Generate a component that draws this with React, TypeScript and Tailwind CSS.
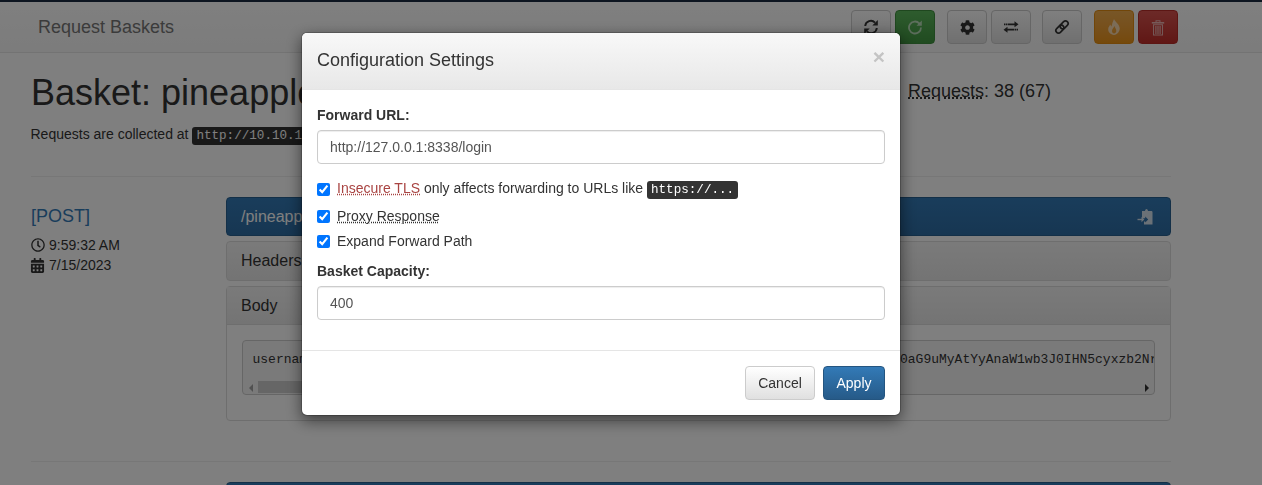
import React from "react";
import { FaCog, FaRegClock, FaCalendarAlt } from "react-icons/fa";

const btnBase = "w-10 h-[34px] flex items-center justify-center rounded border text-sm shrink-0";
const btnDefault = btnBase + " border-[#ccc] bg-gradient-to-b from-white to-[#e0e0e0] text-[#333]";

function SyncIcon() {
  return (
    <svg width="16" height="16" viewBox="0 0 16 16" fill="currentColor">
      <path d="M2.200 7A5.700 5.700 0 0 1 12 3.600" fill="none" stroke="currentColor" strokeWidth="1.900" />
      <path d="M14.800 1v5.500H9.300z" />
      <path d="M13.800 9A5.700 5.700 0 0 1 4 12.400" fill="none" stroke="currentColor" strokeWidth="1.900" />
      <path d="M1.200 15V9.500H6.700z" />
    </svg>
  );
}
function RedoIcon() {
  return (
    <svg width="16" height="16" viewBox="0 0 16 16" fill="currentColor">
      <path d="M12.300 4.300A6 6 0 1 0 14 8.500" fill="none" stroke="currentColor" strokeWidth="1.800" />
      <path d="M14.800 1.500v5.300H9.500z" />
    </svg>
  );
}
function ExchangeIcon() {
  return (
    <svg width="16" height="16" viewBox="0 0 16 16" fill="currentColor">
      <path d="M4.500 4.500h7V2.300L15.500 5.300l-4 3V6.200h-7z" />
      <path d="M1 4.500h1.500v1.700H1zM3 4.500h1v1.700H3z" />
      <path d="M11.500 9.800h-7V7.700L.5 10.700l4 3v-2.200h7z" />
      <path d="M15 9.800h-1.500v1.700H15zM13 9.800h-1v1.700h1z" />
    </svg>
  );
}
function LinkIcon() {
  return (
    <svg width="16" height="16" viewBox="0 0 16 16" fill="none" stroke="currentColor" strokeWidth="1.700">
      <g transform="rotate(-45 8 8)">
        <rect x="0.500" y="5.400" width="9" height="5.200" rx="2.600" />
        <rect x="6.500" y="5.400" width="9" height="5.200" rx="2.600" />
      </g>
    </svg>
  );
}
function FireIcon() {
  return (
    <svg width="16" height="16" viewBox="0 0 16 16" fill="currentColor" fillRule="evenodd">
      <path d="M8 0c1 3 5 4.500 5.700 9 .3 3.500-2.500 6.500-5.700 7-3.500-.3-6-3-5.800-6 .1-2 1.500-3.500 2.300-4.500.1 1 .5 1.500 1 2C6 5 6.800 2.500 8 0zM8.500 7c-.3 1.500-2.500 2.500-2.500 5 0 1.500 1 2.500 2 2.500s2.300-1 2.300-2.500c0-2-1.300-3-1.800-5z" />
    </svg>
  );
}
function TrashIcon() {
  return (
    <svg width="16" height="17" viewBox="0 0 16 17" fill="currentColor">
      <path d="M5.500 3V1.200h5V3h-1V2.200h-3V3z" />
      <path d="M1.800 3h12.400v1.600H1.800z" />
      <path d="M3 5.200h10V16.500H3zM4 6.200v9.300h8V6.200z" fillRule="evenodd" />
      <path d="M5.300 7h1.200v8H5.300zM7.400 7h1.200v8H7.400zM9.500 7h1.200v8H9.500z" />
    </svg>
  );
}
function PasteIcon() {
  return (
    <svg width="17" height="16" viewBox="0 0 17 16" fill="currentColor">
      <path d="M5 2h3c.2-1.200.8-2 1.500-2s1.300.8 1.500 2h3c1 0 1.500.5 1.500 1.200V15.500H7v-3h1.200v.9l3-2.900-3-2.900v1.700H5z" />
      <path d="M7.800 3.200h3.400V2.500H7.800z" opacity="0.400" />
      <path d="M.5 9.800H5v1.400H.5z" />
      <path d="M4.500 7.800L7.300 10.500 4.500 13.200z" />
    </svg>
  );
}

const kbdClass = "rounded-[3px] bg-[#333] px-1 py-0.5 font-['Liberation_Mono',monospace] text-[12.6px] text-white";
const dotted = "underline decoration-dotted decoration-[#333]";

export default function App() {
  return (
    <div className="relative h-[485px] w-[1262px] overflow-hidden bg-white font-['Liberation_Sans',Arial,sans-serif] text-sm leading-5 text-[#333]">
      <nav className="h-[53px] border-t-2 border-b border-t-[#1a2a40] border-b-[#e7e7e7] bg-gradient-to-b from-white to-[#f8f8f8] flex items-start">
        <span className="ml-[38px] mt-[15px] text-lg leading-5 text-[#777]">Request Baskets</span>
        <div className="ml-auto mr-[84px] mt-2 flex">
          <div className="flex gap-1">
            <button className={btnDefault}><SyncIcon /></button>
            <button className={btnBase + " border-[#3e8f3e] bg-gradient-to-b from-[#5cb85c] to-[#419641] text-white/60"}><RedoIcon /></button>
          </div>
          <div className="ml-3 flex gap-1">
            <button className={btnDefault}><FaCog size={15} /></button>
            <button className={btnDefault}><ExchangeIcon /></button>
          </div>
          <button className={btnDefault + " ml-[11px]"}><LinkIcon /></button>
          <div className="ml-3 flex gap-1">
            <button className={btnBase + " border-[#e38d13] bg-gradient-to-b from-[#f0ad4e] to-[#eb9316] text-white/60"}><FireIcon /></button>
            <button className={btnBase + " border-[#b92c28] bg-gradient-to-b from-[#d9534f] to-[#c12e2a] text-white/60"}><TrashIcon /></button>
          </div>
        </div>
      </nav>

      <main className="ml-[31px] w-[1140px]">
        <div className="flex items-start h-[124px] border-b border-[#eee]">
          <div className="w-[877px] shrink-0">
            <h1 className="mt-[20px] text-[36px] leading-10 font-normal text-[#333]">Basket: pineapple</h1>
            <p className="mt-[11px] -ml-[0.5px]">
              Requests are collected at{" "}
              <kbd className={kbdClass}>http://10.10.11.224:55555/pineapple</kbd>
            </p>
          </div>
          <div className="mt-[28px] text-lg leading-5 text-[#333]">
            <abbr className={dotted}>Requests</abbr>: 38 (67)
          </div>
        </div>

        <div className="flex h-[285px] border-b border-[#eee]">
          <div className="w-[195px] shrink-0 pt-[29px]">
            <a className="text-lg leading-5 text-[#337ab7]">[POST]</a>
            <div className="mt-[8px] flex items-center gap-1"><FaRegClock size={14} /> 9:59:32 AM</div>
            <div className="-ml-px flex items-center gap-1"><FaCalendarAlt size={15} /> 7/15/2023</div>
          </div>
          <div className="w-[945px] pt-5">
            <div className="flex h-[39px] items-center justify-between rounded border border-[#286090] bg-gradient-to-b from-[#337ab7] to-[#2e6da4] pl-[14px] pr-4 text-base text-white">
              <span>/pineapple</span>
              <span className="opacity-80"><PasteIcon /></span>
            </div>
            <div className="mt-[5px] flex h-10 items-center rounded border border-[#ddd] bg-gradient-to-b from-[#f5f5f5] to-[#e8e8e8] px-[14px] text-base">Headers</div>
            <div className="mt-[5px] h-[135px] rounded border border-[#ddd]">
              <div className="flex h-[38px] items-center bg-gradient-to-b from-[#f5f5f5] to-[#e8e8e8] border-b border-[#ddd] px-[14px] text-base">Body</div>
              <div className="p-[15px]">
                <div className="flex h-[55px] flex-col overflow-hidden rounded border border-[#ccc] bg-[#f5f5f5]">
                  <pre className="h-10 overflow-hidden pl-[9.500px] pt-[10px] font-['Liberation_Mono',monospace] text-[13px] leading-[18.570px] text-[#333]">username=pineapple&amp;password=pineapple&amp;forward_url=http%3A%2F%2F127.0.0.1%3A8338&amp;id=0aG9uMyAtYyAnaW1wb3J0IHN5cyxzb2Nr</pre>
                  <div className="flex h-[13px] items-stretch">
                    <div className="flex w-[15px] items-center justify-center">
                      <div className="h-0 w-0 border-y-[4px] border-r-[4px] border-y-transparent border-r-[#a3a3a3]" />
                    </div>
                    <div className="mb-px w-[500px] bg-[#cdcdcd]" />
                    <div className="flex-1" />
                    <div className="flex w-[15px] items-center justify-center">
                      <div className="h-0 w-0 border-y-[4px] border-l-[4px] border-y-transparent border-l-[#333]" />
                    </div>
                  </div>
                </div>
              </div>
            </div>
          </div>
        </div>
        <div className="ml-[195px] mt-5 h-10 w-[945px] rounded border border-[#286090] bg-gradient-to-b from-[#337ab7] to-[#2e6da4]" />
      </main>

      <div className="fixed inset-0 bg-black/50" />

      <div className="fixed left-[301px] top-[32px] w-[600px] rounded-md border border-black/20 bg-white bg-clip-padding shadow-[0_5px_15px_rgba(0,0,0,0.5)]">
        <div className="flex h-[57px] items-start justify-between rounded-t-[5px] border-b border-[#e5e5e5] bg-gradient-to-b from-[#f8f8f8] to-[#e8e8e8] px-[15px] pt-[15px]">
          <h4 className="text-lg leading-[25.700px] font-normal text-[#333]">Configuration Settings</h4>
          <span className="-mt-px text-[21px] leading-5 font-bold text-[#c4c4c4]">×</span>
        </div>
        <div className="px-[15px] pt-[15px] pb-[30px]">
          <label className="block font-bold mb-[5px]">Forward URL:</label>
          <div className="flex h-[34px] items-center rounded border border-[#ccc] px-3 text-[#555] shadow-[inset_0_1px_1px_rgba(0,0,0,0.075)]">http://127.0.0.1:8338/login</div>
          <div className="mt-[15px] flex h-5 items-center">
            <input type="checkbox" defaultChecked className="mr-[7px] h-[13px] w-[13px]" />
            <span>
              <abbr className="text-[#a94442] underline decoration-dotted decoration-[#a94442]">Insecure TLS</abbr> only affects forwarding to URLs like{" "}
              <kbd className={kbdClass}>https://...</kbd>
            </span>
          </div>
          <div className="mt-[7px] flex h-5 items-center">
            <input type="checkbox" defaultChecked className="mr-[7px] h-[13px] w-[13px]" />
            <abbr className={dotted}>Proxy Response</abbr>
          </div>
          <div className="mt-[5px] flex h-5 items-center">
            <input type="checkbox" defaultChecked className="mr-[7px] h-[13px] w-[13px]" />
            <span>Expand Forward Path</span>
          </div>
          <label className="mt-[10px] block font-bold mb-[5px]">Basket Capacity:</label>
          <div className="flex h-[34px] items-center rounded border border-[#ccc] px-3 text-[#555] shadow-[inset_0_1px_1px_rgba(0,0,0,0.075)]">400</div>
        </div>
        <div className="flex justify-end gap-2 border-t border-[#e5e5e5] p-[15px]">
          <button className="h-[34px] w-[70px] rounded border border-[#ccc] bg-gradient-to-b from-white to-[#e0e0e0] text-[#333]">Cancel</button>
          <button className="h-[34px] w-[62px] rounded border border-[#245580] bg-gradient-to-b from-[#337ab7] to-[#265a88] text-white">Apply</button>
        </div>
      </div>
    </div>
  );
}
